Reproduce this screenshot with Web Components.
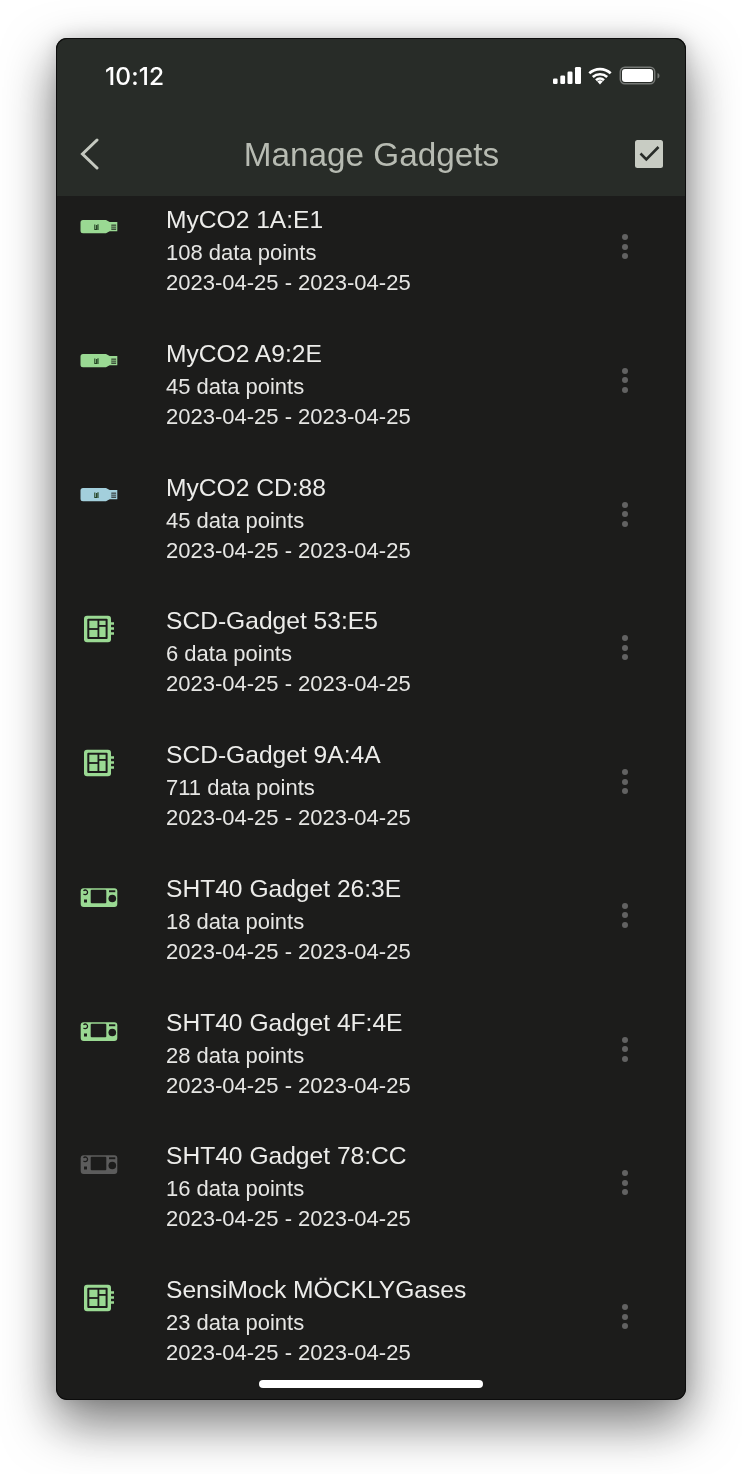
<!DOCTYPE html>
<html lang="en"><head><meta charset="utf-8"><title>Manage Gadgets</title>
<style>
html,body{margin:0;background:#fff;font-family:"Liberation Sans",Arial,sans-serif}
body{width:742px;height:1474px;overflow:hidden}
phone-frame{filter:drop-shadow(0 22px 26px rgba(0,0,0,.5)) drop-shadow(0 0 8px rgba(0,0,0,.15))}
</style></head>
<body>
<phone-frame>
  <status-bar time="10:12"></status-bar>
  <app-bar title="Manage Gadgets"></app-bar>
  <gadget-list>
    <gadget-row kind="usb" color="#9ad993" name="MyCO2 1A:E1" points="108 data points" range="2023-04-25 - 2023-04-25"></gadget-row>
    <gadget-row kind="usb" color="#9ad993" name="MyCO2 A9:2E" points="45 data points" range="2023-04-25 - 2023-04-25"></gadget-row>
    <gadget-row kind="usb" color="#a3cfdc" name="MyCO2 CD:88" points="45 data points" range="2023-04-25 - 2023-04-25"></gadget-row>
    <gadget-row kind="scd" color="#9ad993" name="SCD-Gadget 53:E5" points="6 data points" range="2023-04-25 - 2023-04-25"></gadget-row>
    <gadget-row kind="scd" color="#9ad993" name="SCD-Gadget 9A:4A" points="711 data points" range="2023-04-25 - 2023-04-25"></gadget-row>
    <gadget-row kind="sht" color="#9ad993" name="SHT40 Gadget 26:3E" points="18 data points" range="2023-04-25 - 2023-04-25"></gadget-row>
    <gadget-row kind="sht" color="#9ad993" name="SHT40 Gadget 4F:4E" points="28 data points" range="2023-04-25 - 2023-04-25"></gadget-row>
    <gadget-row kind="sht" color="#5c5c5c" name="SHT40 Gadget 78:CC" points="16 data points" range="2023-04-25 - 2023-04-25"></gadget-row>
    <gadget-row kind="scd" color="#9ad993" name="SensiMock MÖCKLYGases" points="23 data points" range="2023-04-25 - 2023-04-25"></gadget-row>
  </gadget-list>
</phone-frame>
<script>
const shadow=(el,html)=>{el.attachShadow({mode:'open'}).innerHTML=html};
customElements.define('phone-frame',class extends HTMLElement{constructor(){super();shadow(this,`<style>
:host{display:block;position:relative;box-sizing:border-box;width:630px;height:1362px;margin:38px 56px 0;border-radius:11px;background:#1c1c1b;overflow:hidden}
.hi{position:absolute;left:203px;top:1342px;width:224px;height:8px;border-radius:4px;background:#fff}
.edge{position:absolute;inset:0;border-radius:11px;box-shadow:inset 0 0 0 1px #0c0c0c;pointer-events:none}
</style><slot></slot><div class="hi"></div><div class="edge"></div>`)}
});
customElements.define('status-bar',class extends HTMLElement{constructor(){super();shadow(this,`<style>
:host{display:flex;align-items:center;height:76px;background:#282c28;padding:0 26px 0 49px;box-sizing:border-box;color:#fff}
.t{font:500 24.500px/1 Inter,Roboto,sans-serif;letter-spacing:.1px}
.s{flex:1}
svg{display:block}
</style><span class="t">${this.getAttribute('time')}</span><span class="s"></span>
<svg width="108" height="20" viewBox="0 0 108 20" fill="#fff">
<rect x="1" y="12.500" width="4.600" height="5.500" rx="1.300"/><rect x="8.300" y="9.500" width="4.800" height="8.500" rx="1.300"/><rect x="15.500" y="5.500" width="5" height="12.500" rx="1.300"/><rect x="23" y="1" width="6" height="17" rx="1.300"/>
<path d="M37.300 7.200a15.800 15.800 0 0 1 21.400 0M40.800 11a10.800 10.800 0 0 1 14.400 0M44 14.200a6 6 0 0 1 8 0" fill="none" stroke="#fff" stroke-width="2.700"/><path d="M48 18.500l-2.800-3a4 4 0 0 1 5.600 0z"/>
<rect x="68.300" y="1.300" width="34.400" height="16.400" rx="4.500" fill="none" stroke="#757875" stroke-width="1.500"/><rect x="70" y="3" width="31" height="13" rx="3"/>
<path d="M105.500 7v5.500c1.300-.4 2-1.500 2-2.700s-.7-2.400-2-2.800z" fill="#757875"/></svg>`)}
});
customElements.define('app-bar',class extends HTMLElement{constructor(){super();shadow(this,`<style>
:host{display:flex;align-items:center;height:82px;background:#282c28;padding:0 23px 2px 24px;box-sizing:border-box}
h1{margin:0;padding-top:2px;flex:1;text-align:center;font:400 33.300px/40px "Liberation Sans",Arial,sans-serif;color:#b7bbb2}
svg{display:block;flex:none}
</style>
<svg width="28" height="32" viewBox="0 0 28 32"><path d="M17 2 2.500 16 17 30" fill="none" stroke="#c5c9c0" stroke-width="3" stroke-linecap="round"/></svg>
<h1>${this.getAttribute('title')}</h1>
<svg width="28" height="28" viewBox="0 0 28 28"><rect x="0" y="0" width="28" height="28" rx="2.500" fill="#c8ccc3"/><path d="M5.500 13.500l5.800 5.800L23.500 7" fill="none" stroke="#282c28" stroke-width="2.600"/></svg>`)}
});
customElements.define('gadget-list',class extends HTMLElement{constructor(){super();shadow(this,`<style>:host{display:block}</style><slot></slot>`)}});
customElements.define('gadget-icon',class extends HTMLElement{constructor(){super();
const c=this.getAttribute('color'),d='#1c1c1b',k=this.getAttribute('kind');
const art={
usb:`<path d="M3 13H26l3.700 2h7.600v9.300h-7.600L26 26.300H3a2.500 2.500 0 0 1-2.500-2.500v-8.300A2.500 2.500 0 0 1 3 13z" fill="${c}"/>
<rect x="31.300" y="17.500" width="4.800" height="5.500" fill="${d}" opacity=".72"/><path d="M31.300 19.300h4.800M31.300 21.200h4.800" stroke="${c}" stroke-width=".7"/>
<path d="M14.800 17.500v5h1.800v-4.600M18 17.300v5.700" fill="none" stroke="#234223" stroke-width="1.100"/>`,
scd:`<rect x="4" y="7.750" width="27" height="26.500" rx="3" fill="${c}"/>
<path d="M31 15.500h3M31 20.500h3M31 25.500h3" stroke="${c}" stroke-width="2.400"/>
<rect x="7.300" y="10.700" width="20.300" height="20.300" rx="1" fill="${d}"/>
<rect x="9.300" y="12.700" width="8.200" height="7.400" fill="${c}"/><rect x="19.300" y="12.700" width="6.300" height="4.300" fill="${c}"/>
<rect x="9.300" y="21.900" width="8.200" height="7.100" fill="${c}"/><rect x="19.300" y="18.800" width="6.300" height="10.200" fill="${c}"/>`,
sht:`<rect x=".7" y="12.250" width="36.600" height="18.800" rx="3" fill="${c}"/>
<rect x="10.700" y="13.700" width="15.600" height="13.500" rx="1" fill="${d}"/>
<rect x="29" y="14.300" width="6.300" height="1.900" fill="${d}"/><circle cx="32.300" cy="22.500" r="3.800" fill="${d}"/>
<path d="M3.500 14.800a2.300 2.300 0 1 1 0 3" fill="none" stroke="${d}" stroke-width="1.300"/><rect x="4" y="23.500" width="3" height="3" fill="${d}"/>`};
shadow(this,`<style>:host{display:block;width:40px;height:40px}svg{display:block}</style><svg width="40" height="40" viewBox="0 0 40 40">${art[k]}</svg>`)}
});
customElements.define('gadget-row',class extends HTMLElement{constructor(){super();const a=n=>this.getAttribute(n);shadow(this,`<style>
:host{display:flex;align-items:flex-start;height:133.75px;box-sizing:border-box;padding:7px 0 0 24px;font-family:"Liberation Sans",Arial,sans-serif}
gadget-icon{margin-top:4px;flex:none}
.txt{margin-left:46px;flex:1;min-width:0}
.n{font-size:24.600px;line-height:32px;padding-top:1px;color:#ececea}
.l{font-size:22px;line-height:30px;color:#e6e6e4}
.n+.l{margin-top:2px}
.k{flex:none;display:flex;flex-direction:column;gap:3.500px;margin:31px 58px 0 0}
.k i{display:block;width:6px;height:6px;border-radius:50%;background:#626262}
</style>
<gadget-icon kind="${a('kind')}" color="${a('color')}"></gadget-icon>
<div class="txt"><div class="n">${a('name')}</div><div class="l">${a('points')}</div><div class="l">${a('range')}</div></div>
<div class="k"><i></i><i></i><i></i></div>`)}
});
</script>
</body></html>
